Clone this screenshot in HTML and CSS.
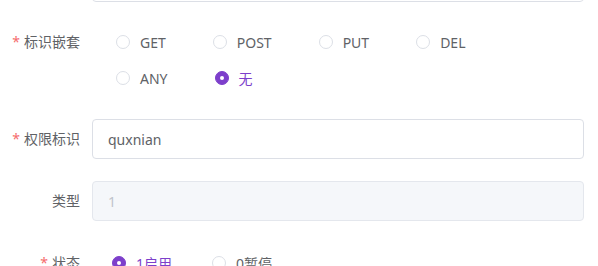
FILE: index.html
```html
<!DOCTYPE html>
<html>
<head>
<title>编辑权限</title>
<link rel="stylesheet" href="styles.css">
<meta name="viewport" content="width=device-width, initial-scale=1.0">
</head>
<body>
<form class="form">
  <div class="form-item">
    <label class="form-label">上级</label>
    <div class="form-content">
      <input class="input" type="text" value="">
    </div>
  </div>
  <div class="form-item">
    <label class="form-label form-label-short required">标识嵌套</label>
    <div class="form-content">
      <div class="radio-group radio-group-wrap">
        <label class="radio"><span class="radio-circle"></span><span class="radio-text">GET</span></label>
        <label class="radio"><span class="radio-circle"></span><span class="radio-text">POST</span></label>
        <label class="radio"><span class="radio-circle"></span><span class="radio-text">PUT</span></label>
        <label class="radio"><span class="radio-circle"></span><span class="radio-text">DEL</span></label>
        <label class="radio"><span class="radio-circle"></span><span class="radio-text">ANY</span></label>
        <label class="radio checked"><span class="radio-circle"></span><span class="radio-text">无</span></label>
      </div>
    </div>
  </div>
  <div class="form-item">
    <label class="form-label required">权限标识</label>
    <div class="form-content">
      <input class="input" type="text" value="quxnian">
    </div>
  </div>
  <div class="form-item">
    <label class="form-label">类型</label>
    <div class="form-content">
      <input class="input" type="text" value="1" disabled>
    </div>
  </div>
  <div class="form-item">
    <label class="form-label required">状态</label>
    <div class="form-content">
      <div class="radio-group radio-group-state">
        <label class="radio checked"><span class="radio-circle"></span><span class="radio-text">1启用</span></label>
        <label class="radio"><span class="radio-circle"></span><span class="radio-text">0暂停</span></label>
      </div>
    </div>
  </div>
</form>
</body>
</html>
```

FILE: styles.css
```css
* {
  box-sizing: border-box;
}
body {
  margin: 0;
  font-family: "Noto Sans", "Noto Sans CJK SC", sans-serif;
  font-size: 14px;
  color: #606266;
  background: #fff;
  overflow: hidden;
}
.form {
  margin-top: -38px;
  padding-right: 14px;
}
.form-item {
  display: flex;
  margin-bottom: 22px;
}
.form-label {
  width: 92px;
  flex: none;
  padding-right: 12px;
  text-align: right;
  line-height: 40px;
  color: #606266;
}
.form-label-short {
  line-height: 36px;
}
.required::before {
  content: "*";
  color: #f56c6c;
  margin-right: 4px;
}
.form-content {
  flex: 1;
  min-width: 0;
}
.input {
  display: block;
  width: 100%;
  height: 40px;
  padding: 0 15px;
  border: 1px solid #dcdfe6;
  border-radius: 4px;
  font-family: inherit;
  font-size: 14px;
  color: #606266;
  background: #fff;
  outline: none;
}
.input:disabled {
  background: #f5f7fa;
  border-color: #e4e7ed;
  color: #c0c4cc;
}
.radio-group {
  display: flex;
  flex-wrap: wrap;
}
.radio-group-wrap {
  padding-left: 24px;
  padding-bottom: 1px;
  max-width: 460px;
}
.radio-group-wrap .radio {
  height: 36px;
  margin-right: 47px;
}
.radio-group-state {
  padding-left: 20px;
}
.radio-group-state .radio {
  height: 40px;
  margin-right: 40px;
}
.radio {
  display: flex;
  align-items: center;
  cursor: pointer;
  color: #606266;
}
.radio-circle {
  width: 14px;
  height: 14px;
  border: 1px solid #dcdfe6;
  border-radius: 50%;
  background: #fff;
  position: relative;
}
.radio-text {
  padding-left: 10px;
}
.radio.checked .radio-circle {
  background: #7d3fcb;
  border-color: #7d3fcb;
}
.radio.checked .radio-circle::after {
  content: "";
  position: absolute;
  width: 4px;
  height: 4px;
  border-radius: 50%;
  background: #fff;
  left: 50%;
  top: 50%;
  transform: translate(-50%, -50%);
}
.radio.checked .radio-text {
  color: #7d3fcb;
}
```
